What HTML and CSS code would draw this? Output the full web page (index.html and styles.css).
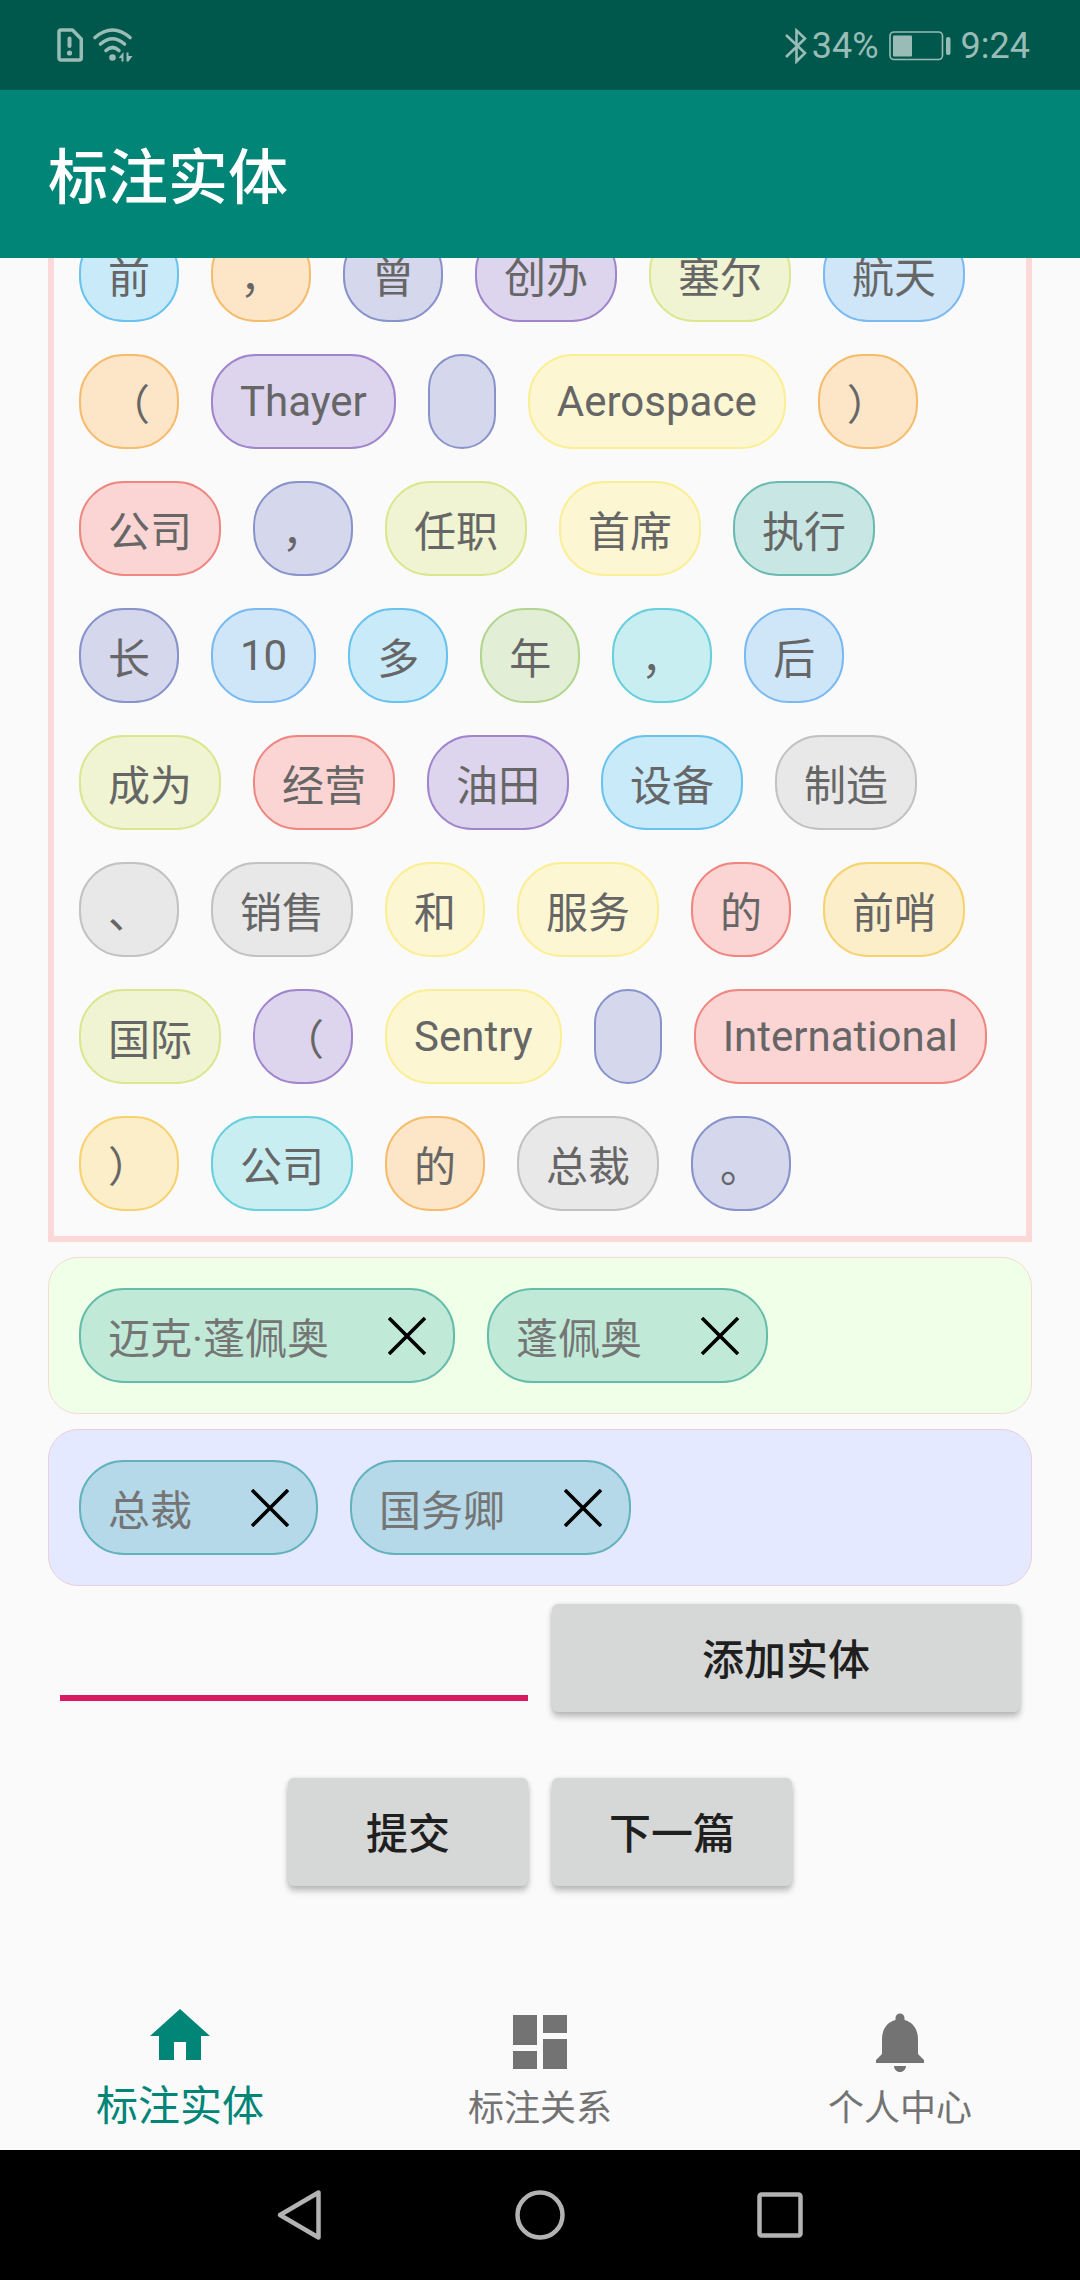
FILE: index.html
```html
<!DOCTYPE html>
<html lang="zh-CN">
<head>
<meta charset="utf-8">
<meta name="viewport" content="width=device-width, initial-scale=1">
<title>标注实体</title>
<link rel="stylesheet" href="styles.css">
</head>
<body>
<div class="status-bar">
  <div class="status-group">
    <svg class="icon-sim" width="26" height="34" viewBox="0 0 26 34" fill="none" stroke="currentColor" stroke-width="3.5" stroke-linejoin="round" stroke-linecap="round"><path d="M4 2h11.500l8.750 9v19a2 2 0 0 1-2 2H4a2 2 0 0 1-2-2V4a2 2 0 0 1 2-2z"/><path d="M12.500 10.500v7.500" stroke-width="4"/><circle cx="12.500" cy="25" r="2.600" fill="currentColor" stroke="none"/></svg>
    <svg class="icon-wifi" width="40" height="34" viewBox="0 0 40 34" fill="none" stroke="currentColor" stroke-width="3.600" stroke-linecap="round"><path d="M2 9.500Q19.500-5.500 37 9.500"/><path d="M7.500 16Q19.500 5.500 31.500 16"/><path d="M13 22.500Q19.500 16.500 26 22.500"/><circle cx="19.500" cy="29.500" r="3.300" fill="currentColor" stroke="none"/><path d="M25.500 30l5-6v9.500h-2v-3.500zM33.500 33.500v-9h2v3.500h4l-4 5.500z" fill="currentColor" stroke="none"/></svg>
  </div>
  <div class="status-group status-right">
    <svg width="22" height="36" viewBox="0 0 22 36" fill="none" stroke="currentColor" stroke-width="2.600" stroke-linejoin="miter"><path d="M1 7l19 18-8.500 8.500v-31l8.500 8L1 29"/></svg>
    <span class="status-percent">34%</span>
    <svg class="icon-battery" width="62" height="30" viewBox="0 0 62 30" fill="none"><rect x="1" y="1" width="52.500" height="27.500" rx="4" stroke="currentColor" stroke-width="1.600"/><rect x="4" y="4.500" width="19" height="21" rx="1" fill="currentColor"/><rect x="57" y="6" width="4.500" height="18" rx="2" fill="currentColor"/></svg>
    <span class="status-time">9:24</span>
  </div>
</div>

<header class="app-bar"><h1>标注实体</h1></header>

<main class="content">
  <section class="tokens" aria-label="原文">
    <button class="token sky">前</button>
    <button class="token orange">，</button>
    <button class="token indigo">曾</button>
    <button class="token purple">创办</button>
    <button class="token lime">塞尔</button>
    <button class="token blue">航天</button>
    <button class="token orange">（</button>
    <button class="token purple">Thayer</button>
    <button class="token indigo" aria-label="空格"> </button>
    <button class="token yellow">Aerospace</button>
    <button class="token orange">）</button>
    <button class="token red">公司</button>
    <button class="token indigo">，</button>
    <button class="token lime">任职</button>
    <button class="token yellow">首席</button>
    <button class="token teal">执行</button>
    <button class="token indigo">长</button>
    <button class="token blue">10</button>
    <button class="token sky">多</button>
    <button class="token green">年</button>
    <button class="token cyan">，</button>
    <button class="token blue">后</button>
    <button class="token lime">成为</button>
    <button class="token red">经营</button>
    <button class="token purple">油田</button>
    <button class="token sky">设备</button>
    <button class="token grey">制造</button>
    <button class="token grey">、</button>
    <button class="token grey">销售</button>
    <button class="token yellow">和</button>
    <button class="token yellow">服务</button>
    <button class="token red">的</button>
    <button class="token amber">前哨</button>
    <button class="token lime">国际</button>
    <button class="token purple">（</button>
    <button class="token yellow">Sentry</button>
    <button class="token indigo" aria-label="空格"> </button>
    <button class="token red">International</button>
    <button class="token amber">）</button>
    <button class="token cyan">公司</button>
    <button class="token orange">的</button>
    <button class="token grey">总裁</button>
    <button class="token indigo">。</button>
  </section>

  <section class="group group-name" aria-label="人名">
    <span class="entity">迈克·蓬佩奥<button class="remove" aria-label="删除"><svg width="38" height="38" viewBox="0 0 38 38" stroke="currentColor" stroke-width="3.600"><path d="M1 1l36 36M37 1L1 37"/></svg></button></span>
    <span class="entity">蓬佩奥<button class="remove" aria-label="删除"><svg width="38" height="38" viewBox="0 0 38 38" stroke="currentColor" stroke-width="3.600"><path d="M1 1l36 36M37 1L1 37"/></svg></button></span>
  </section>

  <section class="group group-title" aria-label="职务">
    <span class="entity">总裁<button class="remove" aria-label="删除"><svg width="38" height="38" viewBox="0 0 38 38" stroke="currentColor" stroke-width="3.600"><path d="M1 1l36 36M37 1L1 37"/></svg></button></span>
    <span class="entity">国务卿<button class="remove" aria-label="删除"><svg width="38" height="38" viewBox="0 0 38 38" stroke="currentColor" stroke-width="3.600"><path d="M1 1l36 36M37 1L1 37"/></svg></button></span>
  </section>

  <form class="add-row">
    <input class="entity-input" type="text" aria-label="实体">
    <button class="btn" type="button">添加实体</button>
  </form>

  <div class="actions">
    <button class="btn">提交</button>
    <button class="btn">下一篇</button>
  </div>
</main>

<nav class="tabs">
  <a class="tab active" href="#entity">
    <svg width="72" height="72" viewBox="0 0 24 24" fill="currentColor"><path d="M10 20v-6h4v6h5v-8h3L12 3 2 12h3v8z"/></svg>
    <span>标注实体</span>
  </a>
  <a class="tab" href="#relation">
    <svg width="72" height="72" viewBox="0 0 24 24" fill="currentColor"><path d="M3 13h8V3H3v10zm0 8h8v-6H3v6zm10 0h8V11h-8v10zm0-18v6h8V3h-8z"/></svg>
    <span>标注关系</span>
  </a>
  <a class="tab" href="#profile">
    <svg width="72" height="72" viewBox="0 0 24 24" fill="currentColor"><path d="M12 22c1.100 0 2-.9 2-2h-4c0 1.100.89 2 2 2zm6-6v-5c0-3.070-1.640-5.640-4.500-6.320V4c0-.83-.67-1.500-1.500-1.500s-1.500.67-1.500 1.500v.68C7.630 5.360 6 7.920 6 11v5l-2 2v1h16v-1l-2-2z"/></svg>
    <span>个人中心</span>
  </a>
</nav>

<div class="system-nav">
  <button aria-label="返回"><svg width="52" height="52" viewBox="0 0 52 52" fill="none" stroke="currentColor" stroke-width="4.500" stroke-linejoin="round"><path d="M6 26L44.500 3.500v45z"/></svg></button>
  <button aria-label="主页"><svg width="52" height="52" viewBox="0 0 52 52" fill="none" stroke="currentColor" stroke-width="4.500"><circle cx="26" cy="26" r="22.500"/></svg></button>
  <button aria-label="最近任务"><svg width="52" height="52" viewBox="0 0 52 52" fill="none" stroke="currentColor" stroke-width="4.500"><rect x="5.500" y="5.500" width="41" height="41" rx="2"/></svg></button>
</div>
</body>
</html>
```
FILE: styles.css
```css
* {
  box-sizing: border-box;
}

body {
  margin: 0;
  min-height: 100vh;
  display: flex;
  flex-direction: column;
  background: #fafafa;
  color: #666;
  font-family: Roboto, "Noto Sans CJK SC", sans-serif;
  font-size: 42px;
}

button {
  margin: 0;
  padding: 0;
  border: 0;
  background: none;
  color: inherit;
  font: inherit;
}

svg {
  display: block;
  flex: none;
}

/* Status bar */
.status-bar {
  display: flex;
  justify-content: space-between;
  align-items: center;
  height: 90px;
  padding: 0 50px 0 57px;
  background: #00574b;
  color: #99bcb7;
  font-size: 36px;
}

.status-group {
  display: flex;
  align-items: center;
}

.status-right {
  padding-top: 2px;
}

.icon-wifi {
  margin-left: 10px;
}

.status-percent {
  margin: 0 10px 0 5px;
}

.status-time {
  margin-left: 10px;
}

/* App bar */
.app-bar {
  position: relative;
  z-index: 1;
  display: flex;
  align-items: center;
  height: 168px;
  padding: 0 48px 4px;
  background: #008577;
  color: #fff;
}

.app-bar h1 {
  margin: 0;
  font-size: 60px;
  font-weight: 500;
}

/* Scrolled content */
.content {
  flex: 1;
  display: flex;
  flex-direction: column;
  gap: 15px;
  margin-top: -31px;
  padding: 0 48px 96px;
}

.tokens {
  display: flex;
  flex-wrap: wrap;
  gap: 32px;
  padding: 0 25px 25px;
  border: 6px solid #fbd9d8;
  border-top: 0;
}

.token,
.entity {
  display: flex;
  align-items: center;
  height: 95px;
  min-width: 68px;
  padding: 0 27px;
  border: 2px solid;
  border-radius: 45px;
  white-space: pre;
}

.sky    { background: #c8eaf9; border-color: #69c3ee; }
.orange { background: #fde6c8; border-color: #f6bc6d; }
.indigo { background: #d5d7ec; border-color: #8892cb; }
.purple { background: #ddd4ed; border-color: #a085cc; }
.lime   { background: #f0f4d3; border-color: #dbe68f; }
.blue   { background: #cfe6f9; border-color: #7abaf0; }
.yellow { background: #fcf6d3; border-color: #fbef95; }
.red    { background: #fad5d3; border-color: #ef8680; }
.teal   { background: #c8e7e4; border-color: #6abab1; }
.green  { background: #e2efd6; border-color: #b2d68d; }
.cyan   { background: #c8eef2; border-color: #68cfdc; }
.grey   { background: #e8e8e8; border-color: #c2c2c2; }
.amber  { background: #fceec8; border-color: #f6d270; }

/* Labelled entities */
.group {
  display: flex;
  flex-wrap: wrap;
  gap: 32px;
  padding: 30px;
  border: 1px solid;
  border-radius: 30px;
}

.group-name {
  background: #efffe8;
  border-color: #f2dcce;
}

.group-title {
  background: #e4e9ff;
  border-color: #e8cedf;
}

.entity {
  color: #757575;
}

.group-name .entity {
  background: #c0ead7;
  border-color: #66bcab;
}

.group-title .entity {
  background: #b5d9e8;
  border-color: #62b2bd;
}

.remove {
  margin-left: 59px;
  color: #000;
}

/* Form */
.add-row {
  display: grid;
  grid-template-columns: 1fr 1fr;
  gap: 24px;
  padding: 3px 12px 0;
}

.entity-input {
  width: 100%;
  height: 97px;
  padding: 0;
  border: 0;
  border-bottom: 6px solid #d81b60;
  outline: 0;
  background: none;
  color: #222;
  font: inherit;
}

.btn {
  min-width: 240px;
  height: 108px;
  padding-bottom: 3px;
  border-radius: 6px;
  background: #d6d8d7;
  box-shadow: 0 5px 6px rgba(0, 0, 0, 0.24), 0 0 4px rgba(0, 0, 0, 0.1);
  color: #1f1f1f;
  font-weight: 500;
}

.actions {
  display: flex;
  justify-content: center;
  gap: 24px;
  padding-top: 51px;
}

/* Bottom tabs */
.tabs {
  display: grid;
  grid-template-columns: repeat(3, 1fr);
  height: 168px;
}

.tab {
  display: flex;
  flex-direction: column;
  align-items: center;
  gap: 5px;
  padding-top: 24px;
  color: #737373;
  font-size: 36px;
  line-height: 52px;
  text-decoration: none;
}

.tab.active {
  padding-top: 18px;
  gap: 9px;
  color: #008577;
  font-size: 42px;
}

/* System navigation */
.system-nav {
  display: flex;
  justify-content: center;
  height: 130px;
  background: #000;
  color: #b3b3b3;
}

.system-nav button {
  display: flex;
  justify-content: center;
  align-items: center;
  width: 240px;
}
```
